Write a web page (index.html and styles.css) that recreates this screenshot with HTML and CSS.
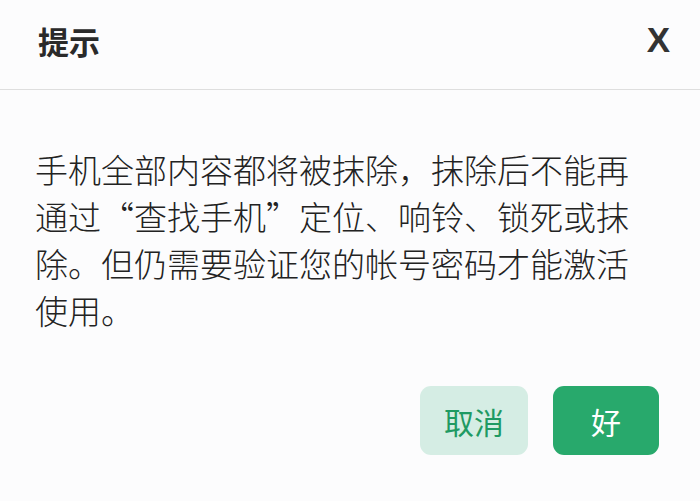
FILE: index.html
```html
<!DOCTYPE html>
<html lang="zh-CN">
<head>
    <meta charset="UTF-8">
    <meta name="viewport" content="width=device-width, initial-scale=1.0">
    <title>提示</title>
    <link rel="stylesheet" href="styles.css">
</head>
<body>
    <div class="dialog">
        <div class="dialog-header">
            <h3 class="dialog-title">提示</h3>
            <span class="dialog-close">X</span>
        </div>
        <p class="dialog-text">手机全部内容都将被抹除，抹除后不能再通过“查找手机”定位、响铃、锁死或抹除。但仍需要验证您的帐号密码才能激活使用。</p>
        <div class="dialog-actions">
            <button class="btn btn-cancel">取消</button>
            <button class="btn btn-ok">好</button>
        </div>
    </div>
</body>
</html>
```

FILE: styles.css
```css
body {
    margin: 0;
    background-color: #fcfcfd;
    font-family: "Noto Sans CJK SC", "Liberation Sans", sans-serif;
    color: #2b2b2b;
}
.dialog {
    width: 700px;
    height: 501px;
}
.dialog-header {
    display: flex;
    align-items: center;
    justify-content: space-between;
    height: 89px;
    padding: 0 30px 0 38px;
    border-bottom: 1px solid #dedede;
    box-sizing: content-box;
}
.dialog-title {
    margin: 0;
    margin-top: -8px;
    font-size: 31px;
    font-weight: bold;
    color: #2a2a2a;
}
.dialog-close {
    margin-top: -10px;
    font-family: "Liberation Sans", sans-serif;
    font-size: 35px;
    font-weight: bold;
    color: #333;
}
.dialog-text {
    margin: 0;
    padding: 56px 60px 0 35px;
    font-size: 33px;
    line-height: 47px;
    font-weight: 300;
    color: #222;
    height: 240px;
}
.dialog-actions {
    display: flex;
    justify-content: flex-end;
    gap: 25px;
    padding-right: 41px;
}
.btn {
    height: 69px;
    border: none;
    border-radius: 11px;
    font-family: "Noto Sans CJK SC", sans-serif;
    font-size: 30px;
    cursor: pointer;
}
.btn-cancel {
    width: 108px;
    background-color: #d5ede4;
    color: #1f9a63;
}
.btn-ok {
    width: 106px;
    background-color: #28a96c;
    color: #fff;
}
```
